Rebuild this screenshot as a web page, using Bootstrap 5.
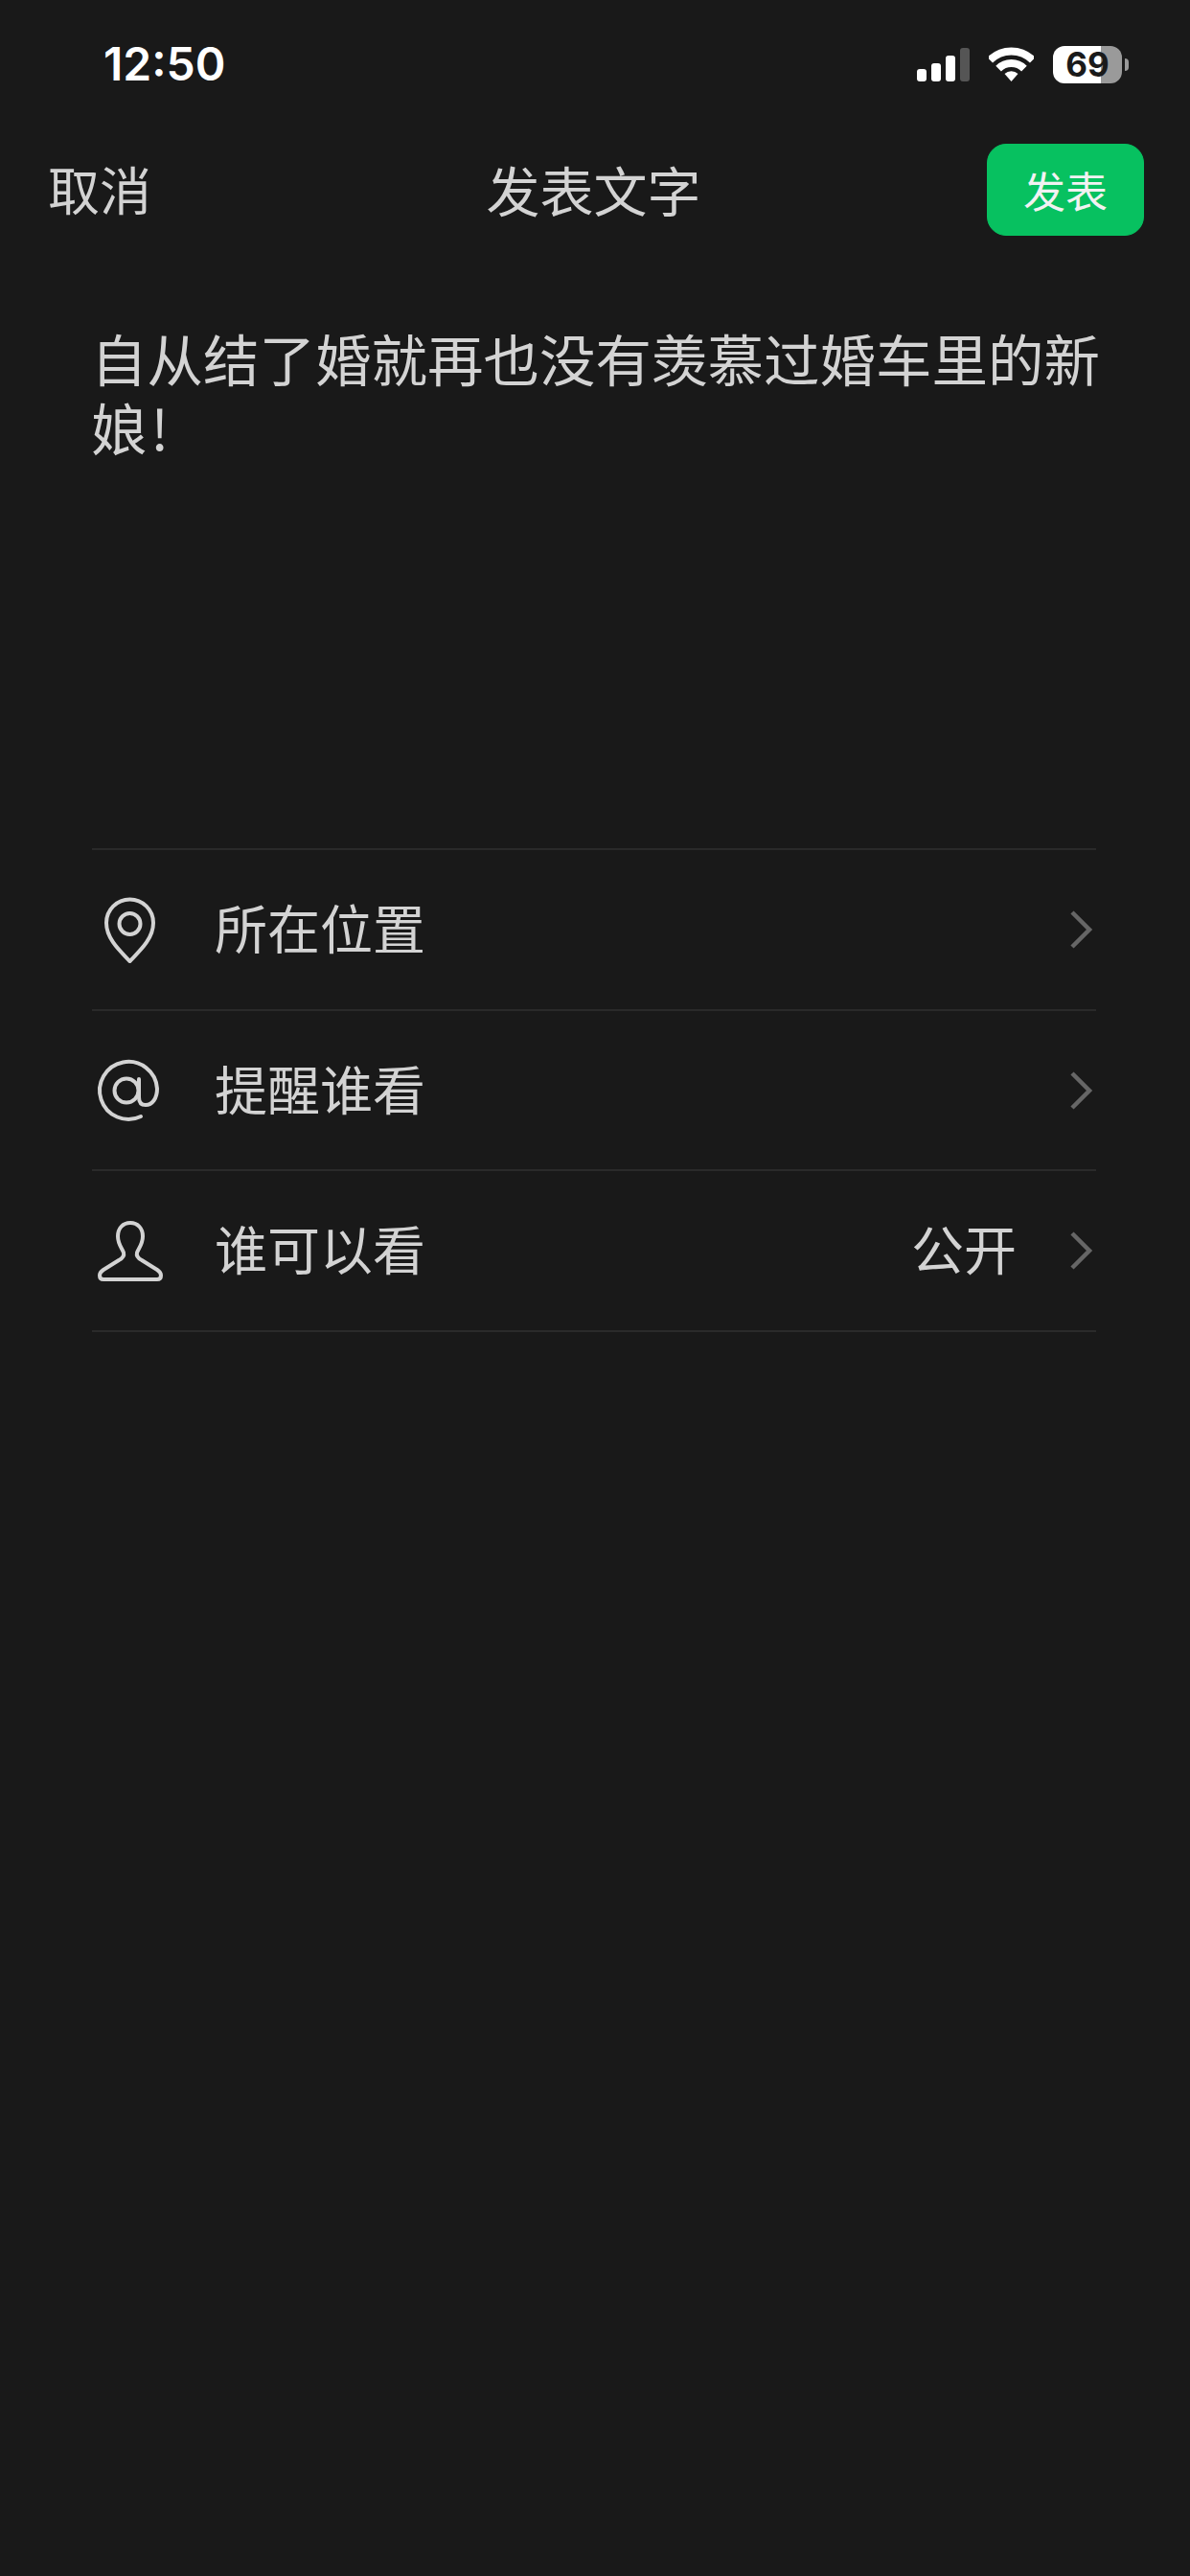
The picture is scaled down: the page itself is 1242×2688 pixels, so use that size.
<!doctype html>
<html lang="zh-CN">
<head>
<meta charset="utf-8">
<title>发表文字</title>
<link rel="stylesheet" href="https://cdn.jsdelivr.net/npm/bootstrap@5.3.0/dist/css/bootstrap.min.css">
<style>
html, body { background: #191919; }
body { min-height: 2688px; color: #d3d3d3; font-family: "Noto Sans CJK SC", "Liberation Sans", sans-serif; }
.phone-status { height: 136px; padding: 28px 64px 30px 108px; }
.status-time { font-family: Inter, "Liberation Sans", sans-serif; font-weight: 600; font-size: 48px; line-height: 78px; color: #fff; }
.status-icons { gap: 20px; }
.signal-bars { gap: 5px; height: 35px; }
.signal-bar { width: 10px; background: #fff; border-radius: 3px; }
.signal-h1 { height: 13px; }
.signal-h2 { height: 19px; }
.signal-h3 { height: 27px; }
.signal-h4 { height: 35px; background: #555; }
.battery-body { width: 72px; height: 39px; border-radius: 12px; background: linear-gradient(90deg, #fff 0 50px, #9a9a9a 50px 72px); color: #1a1a1a; font-family: Inter, "Liberation Sans", sans-serif; font-weight: 700; font-size: 35px; line-height: 39px; text-align: center; }
.battery-nub { width: 4px; height: 13px; margin-left: 3px; background: #999; border-radius: 0 4px 4px 0; }
.top-nav { display: grid; grid-template-columns: 1fr auto 1fr; padding: 14px 48px 0 50px; height: 110px; }
.nav-text { font-size: 54px; line-height: 94px; color: #d3d3d3; }
.nav-title { font-size: 56px; margin-right: 5px; }
.send-btn { --bs-btn-bg: #07c160; --bs-btn-border-color: #07c160; --bs-btn-color: #f2f2f2; --bs-btn-padding-x: 0; --bs-btn-padding-y: 0; --bs-btn-border-radius: 20px; --bs-btn-font-size: 44px; width: 164px; height: 96px; line-height: 92px; }
.post-text { margin: 91px 85px 0 95px; height: 548px; font-size: 58.5px; line-height: 72px; color: #d3d3d3; }
.option-list { --bs-list-group-bg: transparent; --bs-list-group-color: #d3d3d3; --bs-list-group-border-color: #2a2a2a; --bs-list-group-border-width: 2px; --bs-list-group-item-padding-x: 0; --bs-list-group-item-padding-y: 0; margin: 0 98px 0 96px; border-top: 2px solid #2a2a2a; border-radius: 0; }
.option-row { height: 167.7px; font-size: 55px; }
.option-row:last-child { border-bottom-width: 2px !important; }
.option-icon { width: 80px; height: 80px; margin-right: 48px; flex: none; fill: none; stroke: #d3d3d3; stroke-width: 4; }
.option-label { padding-bottom: 7px; }
.option-value { margin-right: 55px; padding-bottom: 7px; }
.option-chevron { width: 28px; height: 44px; flex: none; fill: none; stroke: #666; stroke-width: 4.5; }
</style>
</head>
<body>
<div class="phone-status d-flex justify-content-between align-items-center">
  <div class="status-time">12:50</div>
  <div class="status-icons d-flex align-items-center">
    <div class="signal-bars d-flex align-items-end">
      <div class="signal-bar signal-h1"></div>
      <div class="signal-bar signal-h2"></div>
      <div class="signal-bar signal-h3"></div>
      <div class="signal-bar signal-h4"></div>
    </div>
    <svg width="47" height="36" viewBox="0 0 47 36" aria-hidden="true">
      <path d="M1.2 13.7A31.5 31.5 0 0 1 45.8 13.7" fill="none" stroke="#fff" stroke-width="8"/>
      <path d="M10.1 22.6A19 19 0 0 1 36.9 22.6" fill="none" stroke="#fff" stroke-width="8"/>
      <path d="M23.5 36L16.5 28A10.5 10.5 0 0 1 30.5 28Z" fill="#fff"/>
    </svg>
    <div class="d-flex align-items-center">
      <div class="battery-body">69</div>
      <div class="battery-nub"></div>
    </div>
  </div>
</div>

<div class="top-nav">
  <div class="nav-text">取消</div>
  <div class="nav-text nav-title">发表文字</div>
  <div class="d-flex justify-content-end">
    <button type="button" class="btn send-btn">发表</button>
  </div>
</div>

<div class="post-text">自从结了婚就再也没有羡慕过婚车里的新娘&#8202;!</div>

<div class="list-group list-group-flush option-list">
  <div class="list-group-item option-row d-flex align-items-center">
    <svg class="option-icon" viewBox="0 0 80 80" aria-hidden="true">
      <path d="M39.5 73C30 63 15 50 15 33A24.5 24.5 0 0 1 64 33C64 50 49 63 39.5 73Z" stroke-linejoin="round"/>
      <circle cx="39.5" cy="34" r="11"/>
    </svg>
    <span class="option-label flex-grow-1">所在位置</span>
    <svg class="option-chevron" viewBox="0 0 28 44" aria-hidden="true"><path d="M3 4L21 22L3 40"/></svg>
  </div>
  <div class="list-group-item option-row d-flex align-items-center">
    <svg class="option-icon" viewBox="0 0 80 80" aria-hidden="true">
      <path d="M51 67A30 30 0 1 1 68 38C68 48 63 55 56 55C51 55 49 52 49 47V28" stroke-linecap="round"/>
      <circle cx="36" cy="40" r="12.5"/>
    </svg>
    <span class="option-label flex-grow-1">提醒谁看</span>
    <svg class="option-chevron" viewBox="0 0 28 44" aria-hidden="true"><path d="M3 4L21 22L3 40"/></svg>
  </div>
  <div class="list-group-item option-row d-flex align-items-center">
    <svg class="option-icon" viewBox="0 0 80 80" aria-hidden="true">
      <path d="M40 11C32 11 27 17 27 25C27 33 31 37 33 42C34 46 32 48 28 50L12 60C9 62 8 64 8 66C8 69 10 70 12 70H68C70 70 72 69 72 66C72 64 71 62 68 60L52 50C48 48 46 46 47 42C49 37 53 33 53 25C53 17 48 11 40 11Z" stroke-linejoin="round"/>
    </svg>
    <span class="option-label flex-grow-1">谁可以看</span>
    <span class="option-value">公开</span>
    <svg class="option-chevron" viewBox="0 0 28 44" aria-hidden="true"><path d="M3 4L21 22L3 40"/></svg>
  </div>
</div>
<script src="https://cdn.jsdelivr.net/npm/bootstrap@5.3.0/dist/js/bootstrap.bundle.min.js"></script>
</body>
</html>
